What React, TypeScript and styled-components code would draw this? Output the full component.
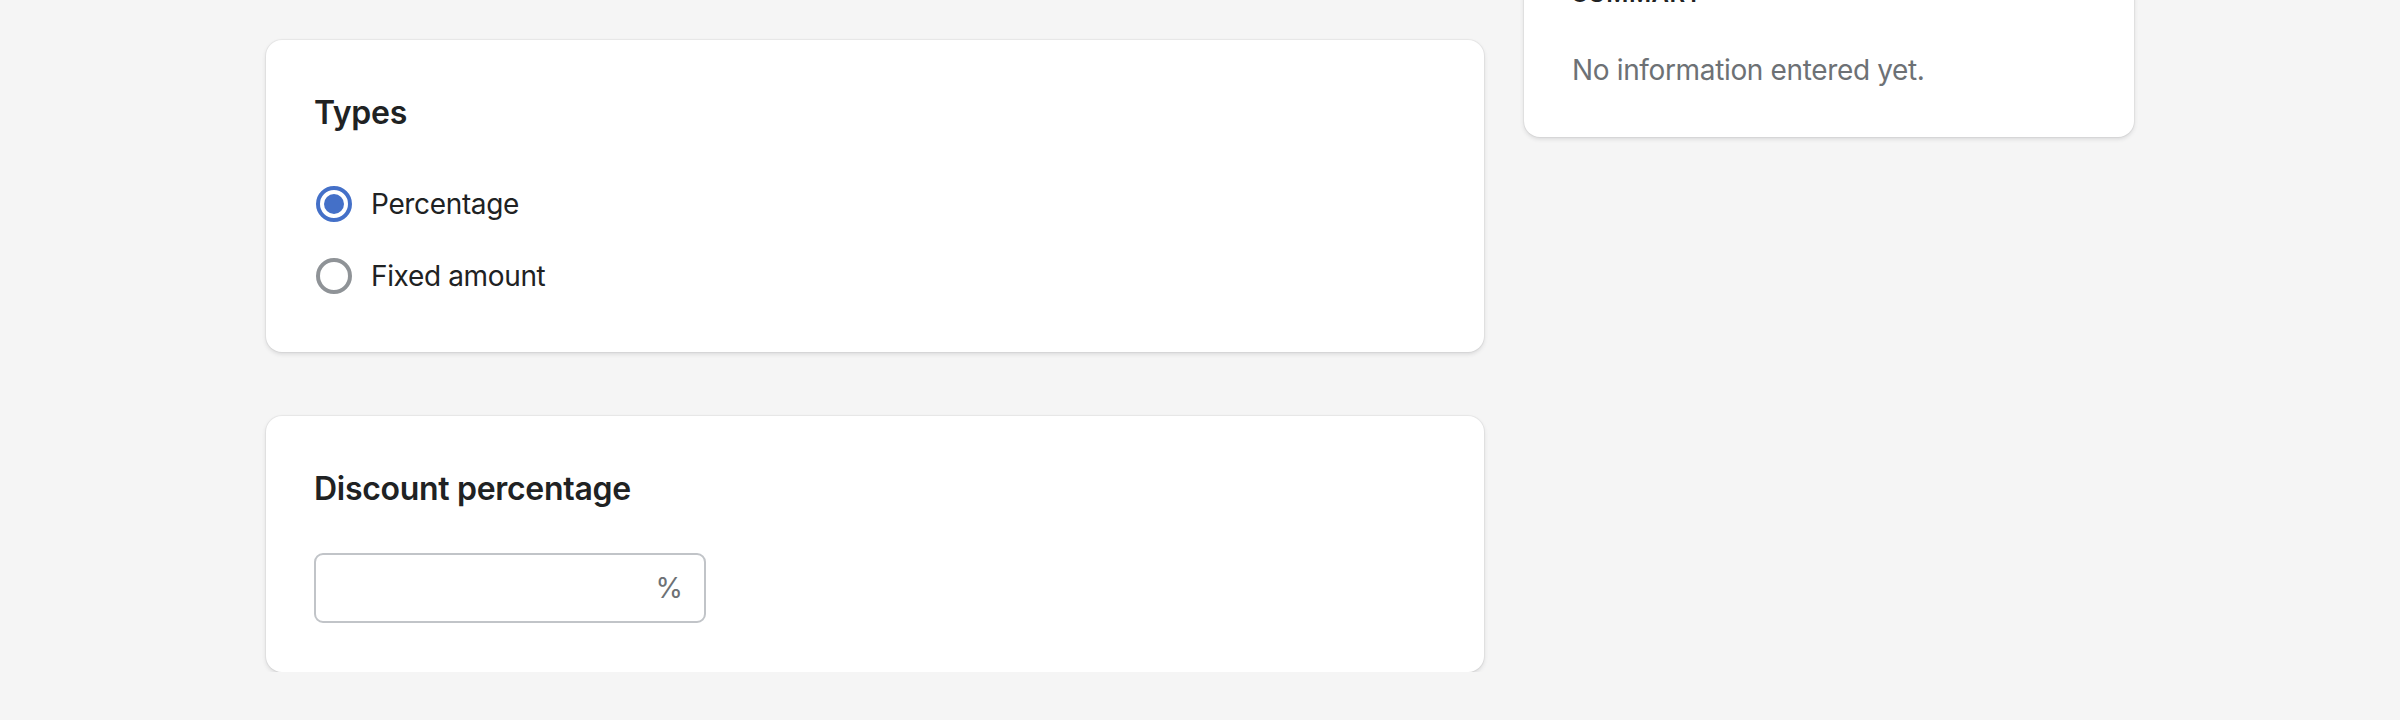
import React, { useState } from "react";
import styled, { createGlobalStyle } from "styled-components";

const GlobalStyle = createGlobalStyle`
  html, body {
    margin: 0;
    padding: 0;
    background: #f5f5f5;
  }
  body {
    font-family: Inter, "Noto Sans", "Liberation Sans", sans-serif;
    color: #202223;
    overflow: hidden;
  }
`;

const Page = styled.div`
  display: flex;
  align-items: flex-start;
  gap: 40px;
  padding-left: 266px;
  margin-top: -70px;
`;

const MainColumn = styled.div`
  width: 1218px;
  display: flex;
  flex-direction: column;
  gap: 64px;
  padding-top: 110px;
`;

const SideColumn = styled.div`
  width: 610px;
  display: flex;
  flex-direction: column;
`;

const Card = styled.section<{ $padBottom?: number }>`
  background: #ffffff;
  border-radius: 16px;
  box-shadow: 0 0 0 1px rgba(63, 63, 68, 0.05), 0 2px 4px rgba(63, 63, 68, 0.16);
  padding: 48px 48px ${(p) => p.$padBottom ?? 48}px 48px;
  display: flex;
  flex-direction: column;
`;

const CardTitle = styled.h2<{ $gap: number }>`
  margin: 0 0 ${(p) => p.$gap}px 0;
  font-size: 32px;
  line-height: 50px;
  font-weight: 600;
  letter-spacing: -0.3px;
  color: #202223;
`;

const SummaryTitle = styled.h3`
  margin: 0 0 40px 0;
  font-size: 24px;
  line-height: 32px;
  font-weight: 600;
  letter-spacing: 0.5px;
  text-transform: uppercase;
  color: #202223;
`;

const Subdued = styled.p`
  margin: 0;
  font-size: 28px;
  line-height: 40px;
  letter-spacing: -0.35px;
  color: #6d7175;
`;

const ChoiceList = styled.div`
  display: flex;
  flex-direction: column;
  gap: 32px;
`;

const Choice = styled.label`
  display: flex;
  align-items: center;
  gap: 19px;
  height: 40px;
  cursor: pointer;
`;

const RadioCircle = styled.span<{ $checked: boolean }>`
  box-sizing: border-box;
  width: 36px;
  height: 36px;
  margin-left: 2px;
  border-radius: 50%;
  border: 4px solid ${(p) => (p.$checked ? "#4470c8" : "#8f9397")};
  display: flex;
  align-items: center;
  justify-content: center;
  flex-shrink: 0;
  &::after {
    content: "";
    width: 20px;
    height: 20px;
    border-radius: 50%;
    background: #4470c8;
    display: ${(p) => (p.$checked ? "block" : "none")};
  }
`;

const ChoiceLabel = styled.span`
  font-size: 28px;
  line-height: 40px;
  letter-spacing: -0.35px;
  color: #202223;
`;

const InputBox = styled.div`
  box-sizing: border-box;
  width: 392px;
  height: 70px;
  border: 2px solid #c1c4c8;
  border-radius: 9px;
  display: flex;
  align-items: center;
  padding: 0 21px 0 20px;
  background: #fff;
`;

const Field = styled.input`
  flex: 1;
  min-width: 0;
  border: none;
  outline: none;
  background: transparent;
  font-family: inherit;
  font-size: 28px;
  color: #202223;
`;

const Suffix = styled.span`
  font-size: 28px;
  line-height: 40px;
  color: #6d7175;
`;

export default function App() {
  const [type, setType] = useState<"percentage" | "fixed">("percentage");
  const choices: { id: "percentage" | "fixed"; label: string }[] = [
    { id: "percentage", label: "Percentage" },
    { id: "fixed", label: "Fixed amount" },
  ];
  return (
    <>
      <GlobalStyle />
      <Page>
        <MainColumn>
          <Card $padBottom={56}>
            <CardTitle $gap={46}>Types</CardTitle>
            <ChoiceList>
              {choices.map((c) => (
                <Choice key={c.id} onClick={() => setType(c.id)}>
                  <RadioCircle $checked={type === c.id} />
                  <ChoiceLabel>{c.label}</ChoiceLabel>
                </Choice>
              ))}
            </ChoiceList>
          </Card>
          <Card $padBottom={49}>
            <CardTitle $gap={39}>Discount percentage</CardTitle>
            <InputBox>
              <Field type="text" aria-label="Discount percentage" />
              <Suffix>%</Suffix>
            </InputBox>
          </Card>
        </MainColumn>
        <SideColumn>
          <Card $padBottom={47}>
            <SummaryTitle>Summary</SummaryTitle>
            <Subdued>No information entered yet.</Subdued>
          </Card>
        </SideColumn>
      </Page>
    </>
  );
}
